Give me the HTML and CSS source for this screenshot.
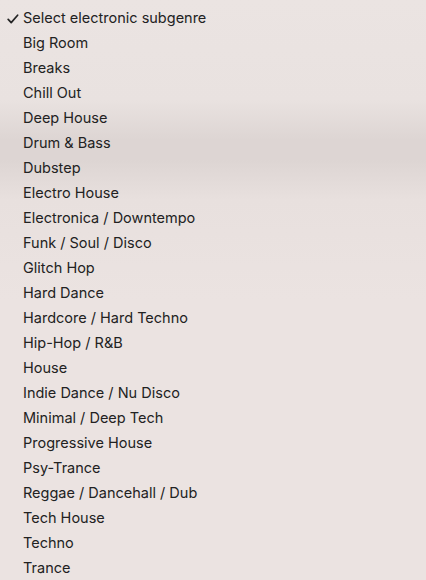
FILE: index.html
```html
<!DOCTYPE html>
<html>
<head>
<meta charset="utf-8">
<link rel="stylesheet" href="styles.css">
</head>
<body>
<ul class="menu">
  <li class="item selected"><svg class="check" width="12" height="10" viewBox="0 0 12 10"><path d="M1.2 5.4 L4.2 8.6 L10.6 1.2" fill="none" stroke="#242424" stroke-width="1.7" stroke-linecap="round" stroke-linejoin="round"/></svg>Select electronic subgenre</li>
  <li class="item">Big Room</li>
  <li class="item">Breaks</li>
  <li class="item">Chill Out</li>
  <li class="item">Deep House</li>
  <li class="item">Drum &amp; Bass</li>
  <li class="item">Dubstep</li>
  <li class="item">Electro House</li>
  <li class="item">Electronica / Downtempo</li>
  <li class="item">Funk / Soul / Disco</li>
  <li class="item">Glitch Hop</li>
  <li class="item">Hard Dance</li>
  <li class="item">Hardcore / Hard Techno</li>
  <li class="item">Hip-Hop / R&amp;B</li>
  <li class="item">House</li>
  <li class="item">Indie Dance / Nu Disco</li>
  <li class="item">Minimal / Deep Tech</li>
  <li class="item">Progressive House</li>
  <li class="item">Psy-Trance</li>
  <li class="item">Reggae / Dancehall / Dub</li>
  <li class="item">Tech House</li>
  <li class="item">Techno</li>
  <li class="item">Trance</li>
</ul>
</body>
</html>
```
FILE: styles.css
```css
html, body {
  margin: 0;
  padding: 0;
  height: 100%;
}
body {
  background: linear-gradient(to bottom,
    #ebe4e2 0px,
    #e9e2e0 100px,
    #ddd5d3 140px,
    #ddd5d3 160px,
    #e8e0de 200px,
    #ebe3e1 300px,
    #ebe3e1 580px);
  font-family: Inter, "Noto Sans", sans-serif;
  font-size: 14.5px;
  color: #222222;
}
.menu {
  list-style: none;
  margin: 0;
  padding: 5px 0 0 0;
}
.item {
  position: relative;
  height: 25px;
  line-height: 25px;
  padding-left: 23px;
  white-space: nowrap;
}
.check {
  position: absolute;
  left: 7px;
  top: 9px;
}
```
